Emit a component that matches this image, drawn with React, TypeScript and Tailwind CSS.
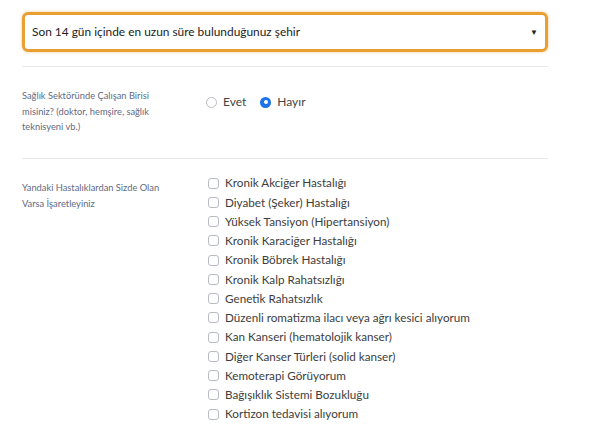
import React from 'react'

const diseases = [
  'Kronik Akciğer Hastalığı',
  'Diyabet (Şeker) Hastalığı',
  'Yüksek Tansiyon (Hipertansiyon)',
  'Kronik Karaciğer Hastalığı',
  'Kronik Böbrek Hastalığı',
  'Kronik Kalp Rahatsızlığı',
  'Genetik Rahatsızlık',
  'Düzenli romatizma ilacı veya ağrı kesici alıyorum',
  'Kan Kanseri (hematolojik kanser)',
  'Diğer Kanser Türleri (solid kanser)',
  'Kemoterapi Görüyorum',
  'Bağışıklık Sistemi Bozukluğu',
  'Kortizon tedavisi alıyorum',
]

const Radio = ({ checked, label }: { checked?: boolean; label: string }) => (
  <label className="flex items-center gap-[6px]">
    {checked ? (
      <span className="w-[11px] h-[11px] rounded-full bg-[#1a73e8] flex items-center justify-center">
        <span className="w-[4px] h-[4px] rounded-full bg-white" />
      </span>
    ) : (
      <span className="w-[11px] h-[11px] rounded-full border border-[#b8bcc2] bg-white" />
    )}
    <span className="text-[12px] text-[#444]">{label}</span>
  </label>
)

export default function App() {
  return (
    <div
      className="w-[600px] h-[427px] bg-white overflow-hidden pt-[12px] pl-[22px]"
      style={{ fontFamily: 'Lato, "Open Sans", sans-serif' }}
    >
      <div className="w-[526px]">
        <div className="h-[40px] border-[3px] border-[#ea9f33] rounded-[6px] shadow-[0_0_3px_rgba(234,159,51,0.6)] flex items-center justify-between pl-[7px] pr-[7px]">
          <span className="text-[11.9px] text-[#222]">
            Son 14 gün içinde en uzun süre bulunduğunuz şehir
          </span>
          <span className="text-[8px] text-[#222]">▼</span>
        </div>

        <div className="mt-[14px] border-t border-[#e6e8eb] pt-[21px] pb-[23px] flex">
          <p className="w-[184px] pr-[24px] text-[9.3px] leading-[15.5px] text-[#5f6a84]">
            Sağlık Sektöründe Çalışan Birisi misiniz? (doktor, hemşire, sağlık teknisyeni vb.)
          </p>
          <div className="flex items-start gap-[14px] pt-[5px]">
            <Radio label="Evet" />
            <Radio checked label="Hayır" />
          </div>
        </div>

        <div className="border-t border-[#e6e8eb] pt-[15px] flex">
          <p className="w-[184px] pr-[24px] pt-[6px] text-[9.3px] leading-[16px] text-[#5f6a84]">
            Yandaki Hastalıklardan Sizde Olan Varsa İşaretleyiniz
          </p>
          <div className="flex flex-col pl-[2px]">
            {diseases.map((d) => (
              <label key={d} className="flex items-center h-[19.25px] gap-[6px]">
                <span className="w-[11px] h-[11px] rounded-[3px] border border-[#b8bcc2] bg-white" />
                <span className="text-[11.7px] text-[#3d3d3d]">{d}</span>
              </label>
            ))}
          </div>
        </div>
      </div>
    </div>
  )
}
